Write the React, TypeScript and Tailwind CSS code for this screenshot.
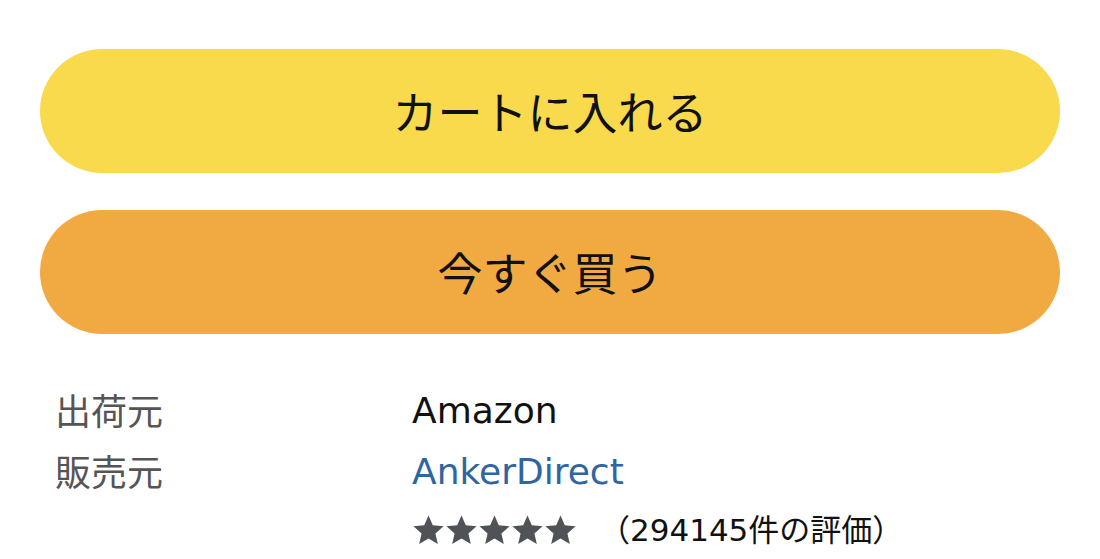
const font = { fontFamily: '"Noto Sans CJK JP", "Noto Sans", sans-serif' };
const latin = { fontFamily: '"DejaVu Sans", "Noto Sans CJK JP", sans-serif' };

function StarIcon() {
  return (
    <svg viewBox="0 0 24 24" className="w-[33px] h-[33px]">
      <polygon
        points="12,1 15.12,8.21 22.94,8.95 17.04,14.14 18.76,21.8 12,17.8 5.24,21.8 6.96,14.14 1.06,8.95 8.88,8.21"
        fill="#4f5357"
      />
    </svg>
  );
}

export default function App() {
  return (
    <div className="min-h-screen bg-white" style={font}>
      <div className="px-[40px] pt-[49px]">
        {/* Buttons */}
        <button className="w-full h-[124px] rounded-full bg-[#f8da4c] text-[#111] text-[45px] flex items-center justify-center">
          カートに入れる
        </button>
        <button className="w-full h-[124px] mt-[37px] rounded-full bg-[#f1a942] text-[#111] text-[45px] flex items-center justify-center">
          今すぐ買う
        </button>

        {/* Details */}
        <div className="mt-[44px] pl-[15px]">
          <div className="flex items-center h-[62px]">
            <div className="w-[357px] text-[36px] text-[#555]">出荷元</div>
            <div className="mt-[3px] text-[36px] text-[#111]" style={latin}>Amazon</div>
          </div>
          <div className="flex items-center h-[60px]">
            <div className="w-[357px] text-[36px] text-[#555]">販売元</div>
            <div className="mt-[3px] text-[36px] text-[#2f65a0]" style={latin}>AnkerDirect</div>
          </div>
          <div className="flex items-center h-[58px]">
            <div className="w-[357px]" />
            <div className="flex items-center mt-[2px]">
              {[0, 1, 2, 3, 4].map((i) => (
                <StarIcon key={i} />
              ))}
            </div>
            <div className="ml-[22px] text-[31px] text-[#111]">
              （<span style={latin}>294145</span>件の評価）
            </div>
          </div>
        </div>
      </div>
    </div>
  );
}
